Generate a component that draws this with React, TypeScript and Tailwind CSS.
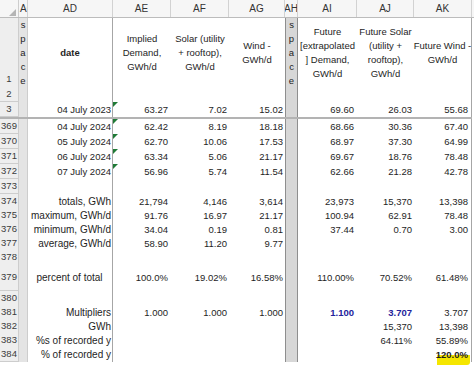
import React from 'react';

const cols = 'grid grid-cols-[19px_9px_85px_58px_58px_56px_13px_59px_57px_58px]';

type Val = string | { t: string; cls: string };

type RowData = {
  n: string;
  h: string;
  label?: string;
  date?: boolean;
  center?: boolean;
  vals?: Val[];
  tri?: boolean;
  pb?: string;
  hl?: boolean;
};

const blue = 'font-bold text-[#23239c]';

const rows: RowData[] = [
  { n: '2', h: 'h-[15px]' },
  { n: '3', h: 'h-[15px]', label: '04 July 2023', date: true, vals: ['63.27', '7.02', '15.02', '69.60', '26.03', '55.68'], tri: true },
];

const lower: RowData[] = [
  { n: '369', h: 'h-[15px]', label: '04 July 2024', date: true, vals: ['62.42', '8.19', '18.18', '68.66', '30.36', '67.40'], tri: true },
  { n: '370', h: 'h-[15px]', label: '05 July 2024', date: true, vals: ['62.70', '10.06', '17.53', '68.97', '37.30', '64.99'], tri: true },
  { n: '371', h: 'h-[15px]', label: '06 July 2024', date: true, vals: ['63.34', '5.06', '21.17', '69.67', '18.76', '78.48'], tri: true },
  { n: '372', h: 'h-[15px]', label: '07 July 2024', date: true, vals: ['56.96', '5.74', '11.54', '62.66', '21.28', '42.78'], tri: true },
  { n: '373', h: 'h-[15px]' },
  { n: '374', h: 'h-[14px]', label: 'totals, GWh', vals: ['21,794', '4,146', '3,614', '23,973', '15,370', '13,398'] },
  { n: '375', h: 'h-[14px]', label: 'maximum, GWh/d', vals: ['91.76', '16.97', '21.17', '100.94', '62.91', '78.48'] },
  { n: '376', h: 'h-[14px]', label: 'minimum, GWh/d', vals: ['34.04', '0.19', '0.81', '37.44', '0.70', '3.00'] },
  { n: '377', h: 'h-[14px]', label: 'average, GWh/d', vals: ['58.90', '11.20', '9.77', '', '', ''] },
  { n: '378', h: 'h-[14px]' },
  { n: '379', h: 'h-[27px]', label: 'percent of total', center: true, pb: 'pb-[6px]', vals: ['100.0%', '19.02%', '16.58%', '110.00%', '70.52%', '61.48%'] },
  { n: '380', h: 'h-[14px]' },
  { n: '381', h: 'h-[14px]', label: 'Multipliers', vals: ['1.000', '1.000', '1.000', { t: '1.100', cls: blue }, { t: '3.707', cls: blue }, '3.707'] },
  { n: '382', h: 'h-[14px]', label: 'GWh', vals: ['', '', '', '', '15,370', '13,398'] },
  { n: '383', h: 'h-[14px]', label: '%s of recorded y', vals: ['', '', '', '', '64.11%', '55.89%'] },
  { n: '384', h: 'h-[14px]', label: '% of recorded y', vals: ['', '', '', '', '', { t: '120.0%', cls: 'font-bold' }], hl: true },
];

function V({ v }: { v?: Val }) {
  if (!v) return null;
  if (typeof v === 'string') return <span>{v}</span>;
  return <span className={v.cls}>{v.t}</span>;
}

function Row({ r }: { r: RowData }) {
  const pb = r.pb ?? '';
  const v = r.vals ?? [];
  return (
    <div className={`${cols} ${r.h} leading-[14px]`}>
      <div className={`flex items-end justify-center border-b border-r border-[#cdcdcd] bg-[#eeeeee] text-[#3b3b3b] ${pb}`}>{r.n}</div>
      <div className="border-r border-[#cdcdcd] bg-[#e4e4e4]" />
      <div
        className={`flex items-end border-r border-[#a6a6a6] pr-[1px] whitespace-nowrap ${r.center ? 'justify-center' : 'justify-end'} ${r.date ? '' : 'text-[10px]'} ${pb}`}
      >
        {r.label}
      </div>
      <div className={`relative flex items-end justify-end pr-[3px] ${pb}`}>
        {r.tri && <span className="absolute left-0 top-0 h-0 w-0 border-t-[5px] border-r-[5px] border-t-[#1f7a36] border-r-transparent" />}
        <V v={v[0]} />
      </div>
      <div className={`flex items-end justify-end pr-[2px] ${pb}`}><V v={v[1]} /></div>
      <div className={`flex items-end justify-end pr-[2px] ${pb}`}><V v={v[2]} /></div>
      <div className="border-x border-[#8e8e8e] bg-[#d7d7d7]" />
      <div className={`flex items-end justify-end pr-[3px] ${pb}`}><V v={v[3]} /></div>
      <div className={`flex items-end justify-end pr-[2px] ${pb}`}><V v={v[4]} /></div>
      <div className={`relative flex items-end justify-end border-r border-[#a6a6a6] pr-[3px] ${pb}`}>
        {r.hl && <span className="absolute left-[23px] top-[8px] h-[10px] w-[33px] rounded-br-[3px] bg-[#f5e600]" />}
        <span className="relative"><V v={v[5]} /></span>
      </div>
    </div>
  );
}

function Stack({ text }: { text: string }) {
  return (
    <div className="flex flex-col items-center justify-center leading-[14px]">
      {text.split('').map((c, i) => (
        <span key={i}>{c}</span>
      ))}
    </div>
  );
}

function Head({ lines, bold }: { lines: string[]; bold?: boolean }) {
  return (
    <div className={`flex flex-col items-center justify-center whitespace-nowrap text-center leading-[14px] ${bold ? 'font-bold' : ''}`}>
      {lines.map((l) => (
        <span key={l}>{l}</span>
      ))}
    </div>
  );
}

export default function App() {
  const letters = ['AC', 'AD', 'AE', 'AF', 'AG', 'AH', 'AI', 'AJ', 'AK'];
  return (
    <div className="h-[366px] w-[474px] overflow-hidden bg-white font-['Liberation_Sans',Arial,sans-serif] text-[9.5px] text-[#1e1e1e]">
      <div className={`${cols} h-[18px] border-b border-[#bcbcbc] bg-[#f6f6f6] text-[10px] text-[#333]`}>
        <div className="flex items-end justify-end border-r border-[#cdcdcd] pb-[1px] pr-[2px]">
          <span className="h-0 w-0 border-b-[7px] border-l-[7px] border-b-[#b5b5b5] border-l-transparent" />
        </div>
        {letters.map((l) => (
          <div
            key={l}
            className={`flex items-center overflow-hidden whitespace-nowrap border-r border-[#d2d2d2] ${l === 'AC' ? 'justify-start pl-[1px]' : 'justify-center'}`}
          >
            {l}
          </div>
        ))}
      </div>

      <div className={`${cols} h-[69px]`}>
        <div className="flex items-end justify-center border-b border-r border-[#cdcdcd] bg-[#eeeeee] pb-[1px] text-[#3b3b3b]">1</div>
        <div className="border-r border-[#cdcdcd] bg-[#e4e4e4]">
          <Stack text="space" />
        </div>
        <div className="flex items-center justify-center border-r border-[#a6a6a6]">
          <Head lines={['date']} bold />
        </div>
        <Head lines={['Implied', 'Demand,', 'GWh/d']} />
        <Head lines={['Solar (utility', '+ rooftop),', 'GWh/d']} />
        <Head lines={['Wind -', 'GWh/d']} />
        <div className="border-x border-[#8e8e8e] bg-[#d7d7d7]">
          <Stack text="space" />
        </div>
        <Head lines={['Future', '[extrapolated', '] Demand,', 'GWh/d']} />
        <Head lines={['Future Solar', '(utility +', 'rooftop),', 'GWh/d']} />
        <div className="flex items-center justify-center border-r border-[#a6a6a6]">
          <Head lines={['Future Wind -', 'GWh/d']} />
        </div>
      </div>

      {rows.map((r) => (
        <Row key={r.n} r={r} />
      ))}
      <div className="h-[2px] w-[472px] bg-[#b3b3b3]" />
      {lower.map((r) => (
        <Row key={r.n} r={r} />
      ))}
    </div>
  );
}
